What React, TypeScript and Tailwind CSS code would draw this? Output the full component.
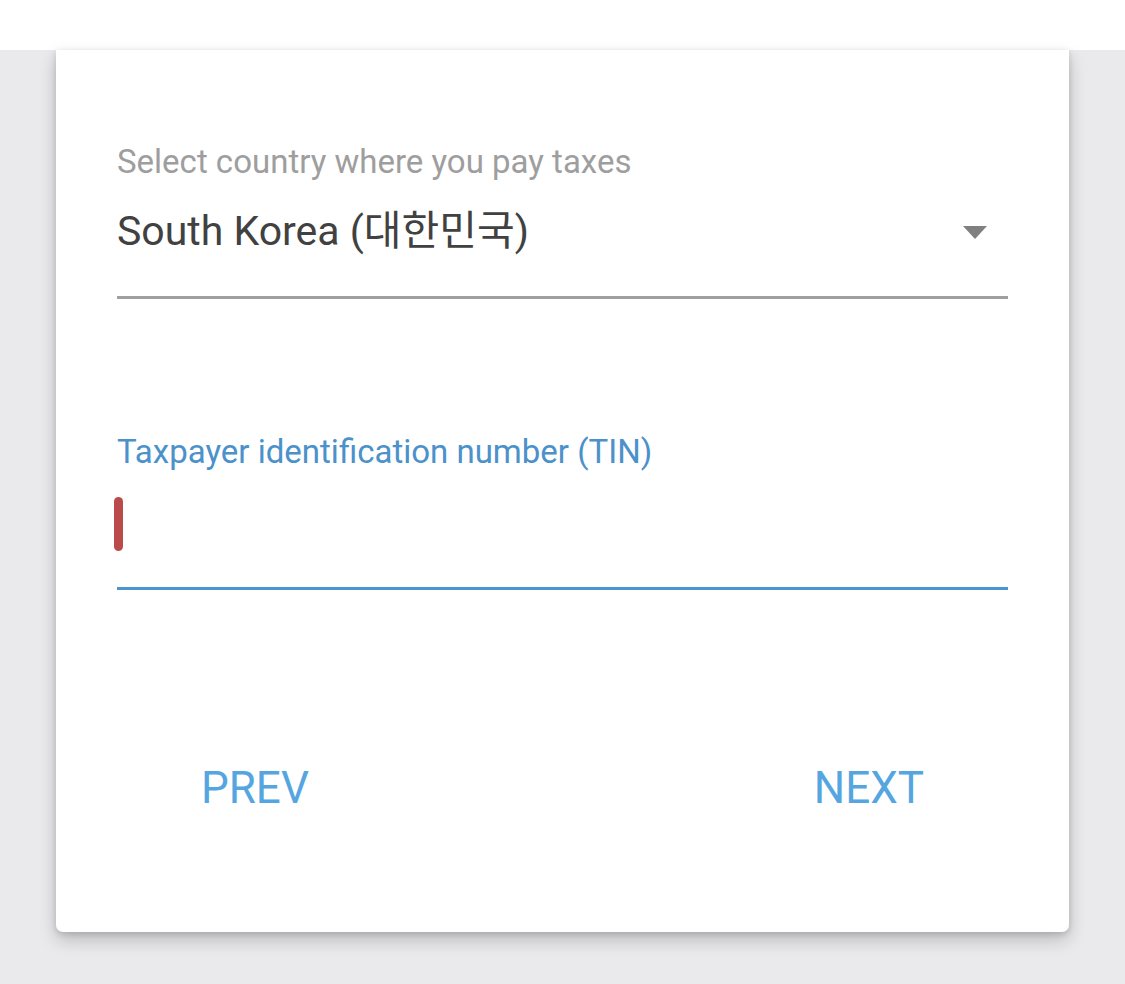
export default function App() {
  const font = { fontFamily: 'Roboto, "Noto Sans CJK KR", sans-serif' };

  return (
    <div
      className="flex h-[984px] w-[1125px] flex-col overflow-hidden bg-[#eaeaec]"
      style={font}
    >
      <div className="h-[50px] w-full shrink-0 bg-white" />
      <div className="px-[56px]">
        <div className="relative flex h-[882px] w-[1013px] flex-col rounded-b-[7px] bg-white px-[61px] pt-[94px] shadow-[0_8px_18px_rgba(0,0,0,0.2),0_2px_6px_rgba(0,0,0,0.14)]">
          {/* country select */}
          <label className="block text-[33px] leading-[36px] text-[#9e9e9e]">
            Select country where you pay taxes
          </label>
          <div className="mt-[27px] flex items-center justify-between">
            <span className="text-[41px] leading-[48px] text-[#414141]">
              South Korea (대한민국)
            </span>
            <svg
              width="26"
              height="16"
              viewBox="0 0 26 16"
              className="mr-[20px] mt-[2px]"
            >
              <polygon points="1,2 25,2 13,15" fill="#808080" />
            </svg>
          </div>
          <div className="mt-[41px] h-[3px] w-full bg-[#a0a0a0]" />

          {/* TIN input */}
          <label className="mt-[135px] block text-[33px] leading-[36px] text-[#4b91ca]">
            Taxpayer identification number (TIN)
          </label>
          <div className="mt-[27px] h-[54px]">
            <div className="-ml-[3px] h-[54px] w-[9px] rounded-full bg-[#bb4a4a]" />
          </div>
          <div className="mt-[36px] h-[3px] w-full bg-[#4b94cd]" />

          {/* actions */}
          <div className="mt-[173px] flex justify-between px-[84px]">
            <button className="text-[44px] leading-[50px] text-[#55a6e0]">
              PREV
            </button>
            <button className="text-[44px] leading-[50px] text-[#55a6e0]">
              NEXT
            </button>
          </div>
        </div>
      </div>
    </div>
  );
}
